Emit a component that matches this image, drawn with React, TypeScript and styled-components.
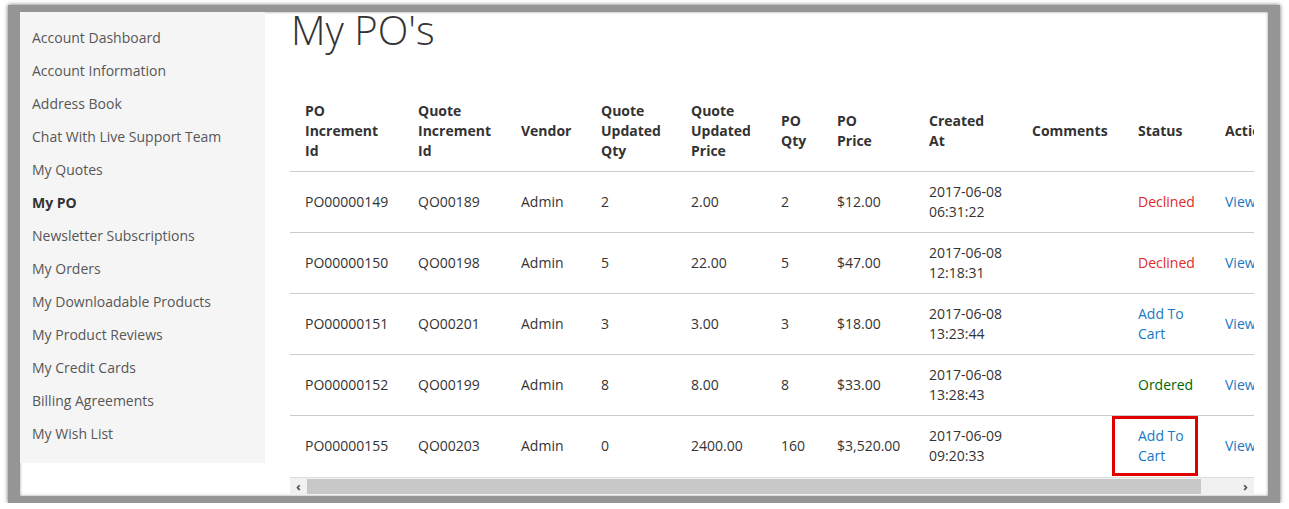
import React from "react";
import styled, { createGlobalStyle } from "styled-components";

const Global = createGlobalStyle`
  html, body { margin: 0; padding: 0; background: #fff; }
  body { font-family: "Open Sans", "Liberation Sans", sans-serif; color: #333; }
`;

const Frame = styled.div`
  margin: 5px 9px 0 8px;
  width: 1248px;
  height: 484px;
  border-style: solid;
  border-color: #959595;
  border-width: 7px 12px 7px 12px;
  box-shadow: 0 0 4px rgba(0,0,0,0.6), inset 0 0 3px rgba(0,0,0,0.4);
  background: #fff;
  display: flex;
  overflow: hidden;
`;

const Sidebar = styled.nav`
  width: 245px;
  height: 451px;
  background: #f5f5f5;
  padding-top: 9px;
  box-sizing: border-box;
  flex-shrink: 0;
`;

const NavItem = styled.div<{ $active?: boolean }>`
  font-size: 14px;
  line-height: 33px;
  padding-left: 12px;
  color: ${p => (p.$active ? "#333" : "#575757")};
  font-weight: ${p => (p.$active ? 700 : 400)};
`;

const Main = styled.main`
  margin-left: 25px;
  width: 964px;
  display: flex;
  flex-direction: column;
`;

const Title = styled.h1`
  margin: -2px 0 0 1px;
  font-size: 40px;
  font-weight: 300;
  line-height: 40px;
  color: #333;
`;

const TableWrap = styled.div`
  margin-top: 41px;
  width: 964px;
  overflow: hidden;
  position: relative;
`;

const Table = styled.table`
  border-collapse: collapse;
  table-layout: fixed;
  width: 1010px;
  font-size: 14px;
`;

const Th = styled.th`
  text-align: left;
  font-weight: 700;
  line-height: 20px;
  padding: 10px 22px 10px 15px;
  vertical-align: middle;
  color: #333;
`;

const Td = styled.td`
  height: 61px;
  box-sizing: border-box;
  padding: 0 10px 0 15px;
  line-height: 20px;
  border-top: 1px solid #ccc;
  vertical-align: middle;
  position: relative;
  color: #333;
`;

const Status = styled.span<{ $kind: string }>`
  color: ${p => (p.$kind === "Declined" ? "#e02b27" : p.$kind === "Ordered" ? "#006400" : "#1979c3")};
`;

const Link = styled.span`
  color: #1979c3;
`;

const Highlight = styled.div`
  position: absolute;
  left: -11px;
  top: 0px;
  width: 86px;
  height: 60px;
  border: 3px solid #e00000;
  box-sizing: border-box;
`;

const Scrollbar = styled.div`
  height: 17px;
  background: #f1f1f1;
  border-top: 1px solid #ddd;
  display: flex;
  align-items: center;
  font-size: 13px;
  font-weight: 700;
  color: #505050;
`;

const Arrow = styled.div`
  width: 17px;
  text-align: center;
  flex-shrink: 0;
`;

const Thumb = styled.div`
  height: 15px;
  width: 894px;
  background: #c8c8c8;
`;

const cols = [113, 103, 80, 90, 90, 56, 92, 103, 106, 87, 90];
const heads = [
  "PO Increment Id", "Quote Increment Id", "Vendor", "Quote Updated Qty", "Quote Updated Price",
  "PO Qty", "PO Price", "Created At", "Comments", "Status", "Action",
];
const rows = [
  ["PO00000149", "QO00189", "Admin", "2", "2.00", "2", "$12.00", "2017-06-08 06:31:22", "Declined"],
  ["PO00000150", "QO00198", "Admin", "5", "22.00", "5", "$47.00", "2017-06-08 12:18:31", "Declined"],
  ["PO00000151", "QO00201", "Admin", "3", "3.00", "3", "$18.00", "2017-06-08 13:23:44", "Add To Cart"],
  ["PO00000152", "QO00199", "Admin", "8", "8.00", "8", "$33.00", "2017-06-08 13:28:43", "Ordered"],
  ["PO00000155", "QO00203", "Admin", "0", "2400.00", "160", "$3,520.00", "2017-06-09 09:20:33", "Add To Cart"],
];
const nav = [
  "Account Dashboard", "Account Information", "Address Book", "Chat With Live Support Team", "My Quotes",
  "My PO", "Newsletter Subscriptions", "My Orders", "My Downloadable Products", "My Product Reviews",
  "My Credit Cards", "Billing Agreements", "My Wish List",
];

export default function App() {
  return (
    <>
      <Global />
      <Frame>
        <Sidebar>
          {nav.map(n => (
            <NavItem key={n} $active={n === "My PO"}>{n}</NavItem>
          ))}
        </Sidebar>
        <Main>
          <Title>My PO's</Title>
          <TableWrap>
            <Table>
              <colgroup>
                {cols.map((w, i) => <col key={i} style={{ width: w }} />)}
              </colgroup>
              <thead>
                <tr>{heads.map(h => <Th key={h}>{h}</Th>)}</tr>
              </thead>
              <tbody>
                {rows.map((r, ri) => (
                  <tr key={r[0]}>
                    {r.slice(0, 8).map((c, i) => <Td key={i}>{c}</Td>)}
                    <Td />
                    <Td>
                      <Status $kind={r[8]}>{r[8]}</Status>
                      {ri === 4 && <Highlight />}
                    </Td>
                    <Td><Link>View</Link></Td>
                  </tr>
                ))}
              </tbody>
            </Table>
            <Scrollbar>
              <Arrow>&lsaquo;</Arrow>
              <Thumb />
              <div style={{ flex: 1 }} />
              <Arrow>&rsaquo;</Arrow>
            </Scrollbar>
          </TableWrap>
        </Main>
      </Frame>
    </>
  );
}
